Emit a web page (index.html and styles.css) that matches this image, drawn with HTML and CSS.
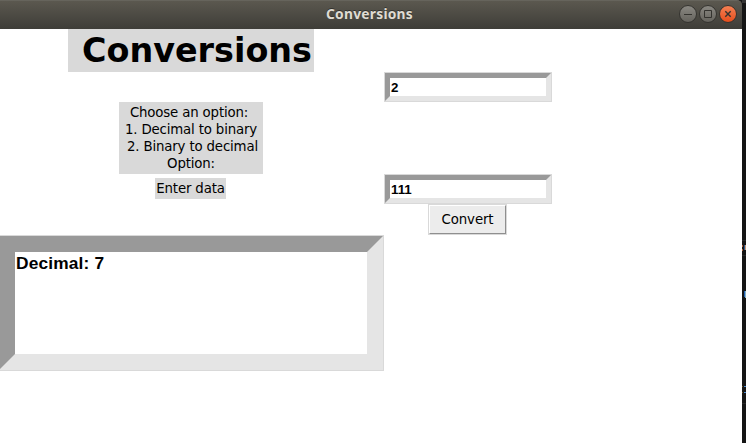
FILE: index.html
```
<!DOCTYPE html>
<html lang="en">
<head>
<meta charset="utf-8">
<title>Conversions</title>
<link rel="stylesheet" href="styles.css">
</head>
<body>
<div class="window">
  <header class="titlebar">
    <span class="caption">Conversions</span>
    <svg class="controls" width="62" height="22" viewBox="0 0 62 22">
      <defs>
        <linearGradient id="grey" x1="0" y1="0" x2="0" y2="1"><stop offset="0" stop-color="#8b8983"/><stop offset="1" stop-color="#64625c"/></linearGradient>
        <linearGradient id="red" x1="0" y1="0" x2="0" y2="1"><stop offset="0" stop-color="#f58255"/><stop offset="1" stop-color="#e64c1b"/></linearGradient>
      </defs>
      <g stroke="#34332f" stroke-width="1">
        <circle cx="11" cy="11" r="8.5" fill="url(#grey)"/>
        <circle cx="31" cy="11" r="8.5" fill="url(#grey)"/>
        <circle cx="51" cy="11" r="8.5" fill="url(#red)"/>
        <path d="M7 11.5h8" fill="none"/>
        <path d="M27.5 7.500h7v7h-7z" fill="none"/>
        <path d="M48.300 8.300l5.400 5.400M53.700 8.300l-5.400 5.400" fill="none" stroke-width="1.400"/>
      </g>
    </svg>
  </header>
  <main class="form">
    <h1 class="label heading">Conversions</h1>
    <div class="entry first">2</div>
    <div class="label menu">
      <div class="opt-a">Choose an option:</div>
      <div>1. Decimal to binary</div>
      <div class="opt-c">2. Binary to decimal</div>
      <div>Option:</div>
    </div>
    <div class="label data">Enter data</div>
    <div class="entry second">111</div>
    <div class="button"><span>Convert</span></div>
    <div class="output"><div class="well">Decimal: 7</div></div>
  </main>
</div>
<aside class="behind">
  <svg width="4" height="443" viewBox="0 0 4 443">
    <path d="M0 0h4v3H0z" fill="#333"/>
    <path d="M0 240.500h4M0 255.500h4M0 403.500h4" stroke="#282828"/>
    <path d="M0 246h1M0 250h1" stroke="#a65a38" stroke-width="2"/>
    <path d="M2.500 245v5" stroke="#31598c"/><path d="M3.500 245v5" stroke="#c79a7c"/>
    <path d="M2.500 291v6" stroke="#2462b8"/><path d="M3.500 291v7" stroke="#86b4c8"/>
    <path d="M2 386.500h2M2 392.500h2" stroke="#4c8ad0"/><path d="M0 386.500h1M0 392.500h1" stroke="#66501d"/>
  </svg>
</aside>
</body>
</html>
```
FILE: styles.css
```
* { box-sizing: border-box; }
body {
  margin: 0;
  width: 746px;
  height: 443px;
  display: flex;
  overflow: hidden;
  background: #151515;
  color: #000;
  font-family: "DejaVu Sans", sans-serif;
}
.window { width: 742px; height: 443px; }
.titlebar {
  height: 29px;
  display: grid;
  grid-template-columns: 1fr auto 1fr;
  align-items: center;
  padding: 0 3px 2px 0;
  border-top: 1px solid #66645c;
  border-radius: 0 5px 0 0;
  background: linear-gradient(#5b584f, #3e3d38);
}
.caption {
  grid-column: 2;
  font: bold 13.800px/20px "Noto Sans", sans-serif;
  letter-spacing: 0.250px;
  color: #dfdbd2;
  text-shadow: 0 -1px #33322e;
}
.controls { justify-self: end; }
.form {
  display: grid;
  width: 744px;
  height: 414px;
  grid-template-columns: 386px 168px 1fr;
  grid-template-rows: 43px 30px 72px 30px 31px 136px;
  margin-left: -2px;
  background: #fff;
}
.label {
  grid-column: 1;
  place-self: center;
  background: #d9d9d9;
  font-size: 13.330px;
  line-height: 17px;
  letter-spacing: -0.160px;
  text-align: center;
  white-space: nowrap;
}
.heading {
  grid-row: 1;
  width: 246px;
  height: 43px;
  margin: 0;
  padding-right: 2px;
  font-size: 33.400px;
  line-height: 43px;
  letter-spacing: 0;
  text-align: right;
}
.menu { grid-row: 3; width: 144px; height: 72px; padding: 2px 1px; }
.opt-a { margin-right: 4px; }
.opt-c { margin-left: 3px; }
.data { grid-row: 4; align-self: start; width: 71px; height: 21px; margin: 4px 0 0 -1px; padding-top: 2px; }
.entry {
  grid-column: 2;
  height: 28px;
  margin: 1px;
  border: 5px solid;
  border-color: #999 #e5e5e5 #e5e5e5 #999;
  outline: 1px solid #d9d9d9;
  padding: 0 1px;
  font: bold 13.330px/19px "Liberation Sans", sans-serif;
  background: #fff;
}
.first { grid-row: 2; }
.second { grid-row: 4; }
.button {
  grid-column: 2;
  grid-row: 5;
  margin-left: 44px;
  width: 79px;
  height: 31px;
  border: 1px solid #d9d9d9;
}
.button span {
  display: block;
  height: 29px;
  border: 1px solid;
  border-color: #fff #8f8f8f #8f8f8f #fff;
  background: #ececec;
  font-size: 13.330px;
  line-height: 27px;
  letter-spacing: -0.100px;
  text-align: center;
}
.output { grid-column: 1; grid-row: 6; border: 1px solid #d9d9d9; }
.well {
  height: 134px;
  border: 16px solid;
  border-color: #999 #e5e5e5 #e5e5e5 #999;
  padding-left: 1px;
  font: bold 17.330px/23px "Liberation Sans", sans-serif;
  letter-spacing: 0.150px;
}
.behind { width: 4px; height: 443px; }
.behind svg { display: block; }
```
